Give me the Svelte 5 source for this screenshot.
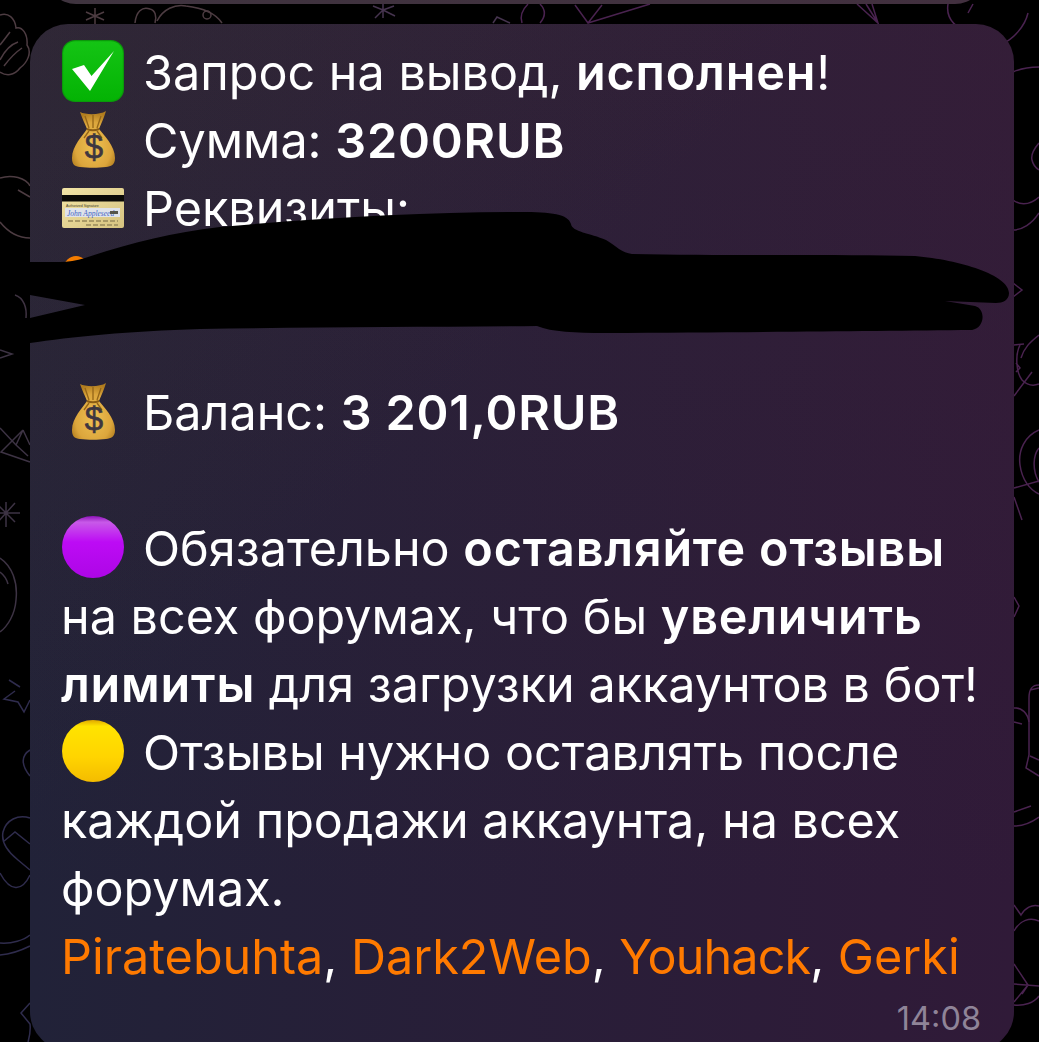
<script>
  const redaction = "M0 262 L60 262 Q72 262 85 258 C130 243 170 233 220 227 C330 217 430 212 520 212 C552 212 568 214 571 224 C572 232 590 233 606 240 C616 246 622 253 632 254 C720 256 840 254 915 256 C960 260 1009 275 1009 293 C1009 300 1003 303 996 303 L945 301 L975 306 C986 309 985 328 972 330 C880 331 760 332 605 333 C575 333 552 332 537 326 C430 327 320 327 200 329 C130 331 70 337 30 343 L0 346 L0 318 L30 318 L85 305 L30 295 L0 292 Z";
</script>

<div class="page">
  <svg class="doodles" viewBox="0 0 1039 1042" width="1039" height="1042" aria-hidden="true">
    <g fill="none" stroke="#4d3c42" stroke-width="1.500">
      <path d="M0 15 C8 12 15 18 16 28 C22 26 28 34 27 45 C32 52 28 62 20 68 C14 76 6 76 0 72" />
      <path d="M0 60 C5 50 12 44 18 42 M4 66 C10 58 16 52 22 48 M0 45 C4 40 7 36 10 32" />
      <path d="M0 178 C12 174 26 178 30 186 M18 190 L30 197 M0 222 C8 232 18 238 30 238" />
      <path d="M15 295 C24 298 27 308 26 318" stroke="#3f3342"/>
      <path d="M95 8 L95 24 M86 12 L104 20 M104 12 L86 20" />
      <path d="M135 23 C136 12 142 6 150 9 C155 10 157 16 155 23 M157 21 C163 9 175 4 186 6 C204 8 216 14 222 23" />
      <circle cx="207" cy="15" r="4" />
    </g>
    <g fill="none" stroke="#46344f" stroke-width="1.500">
      <path d="M383 4 L383 18 M383 10 L373 6 M383 10 L394 6 M383 10 L375 18 M383 10 L395 16" />
      <path d="M493 23 L497 17 L510 23" />
    </g>
    <g fill="none" stroke="#4a2350" stroke-width="1.500">
      <path d="M540 4 C546 10 546 16 540 23 M528 4 C522 10 520 17 522 23" />
      <path d="M575 5 L588 23 L602 5 M588 23 L650 4" />
      <path d="M857 4 L878 23 L872 4 M866 4 L878 23" />
      <path d="M948 4 C946 16 952 27 972 34 C982 38 990 38 1000 37 M973 4 L968 13 M1028 13 C1025 26 1014 39 1000 45 C990 47 975 43 962 36" />
      <path d="M1013 72 C1022 68 1030 67 1039 67" />
      <path d="M1039 143 C1033 150 1031 156 1032 160 C1033 165 1036 168 1039 170" />
      <path d="M1013 200 C1018 204 1028 207 1039 197 M1013 230 C1022 230 1032 224 1039 213" />
      <path d="M1013 283 L1022 290 L1013 297" />
      <path d="M1039 335 C1030 342 1024 348 1021 358 M1014 345 L1024 344 M1020 345 C1015 355 1016 372 1022 380 C1028 386 1034 386 1039 384 M1016 363 L1020 368 L1016 372 M1014 396 L1032 372" />
      <path d="M1039 430 C1025 436 1018 450 1020 465 C1022 480 1030 490 1039 494 M1039 448 C1033 455 1032 470 1039 482 M1014 488 L1039 481 M1014 497 L1022 520" />
      <path d="M1014 597 L1019 606 L1014 617" />
      <path d="M1039 685 C1031 685 1029 690 1029 698 L1029 755 L1026 768 L1039 776 M1030 690 L1039 688 M1030 756 L1039 760" />
      <path d="M1014 708 C1022 707 1028 714 1029 722 M1014 722 L1022 724" />
      <path d="M1014 812 L1031 806 M1014 826 C1024 826 1032 822 1039 817" />
      <path d="M1014 905 L1021 915 C1025 908 1032 904 1039 906 M1014 931 C1020 920 1030 917 1039 921" />
      <path d="M1014 964 L1028 985 L1014 1002 M1014 984 L1039 986 M1014 1005 C1024 1006 1034 1003 1039 996 M1028 985 L1022 994" />
    </g>
    <g fill="none" stroke="#3d3344" stroke-width="1.500">
      <path d="M0 350 L12 354 L0 358" />
      <path d="M0 428 L16 445 L28 456 M23 430 L30 445 M23 430 L1 452 L30 462 M23 430 L16 445" />
      <path d="M-6 513 L20 513 M6 502 L6 527 M-3 504 L15 522 M15 503 L-3 523" />
      <path d="M0 558 C12 566 18 582 16 600 C15 614 8 626 0 632 M0 572 C4 575 7 580 8 584" />
    </g>
    <g fill="none" stroke="#2f2c4d" stroke-width="1.500">
      <path d="M15 691 L4 699 L18 702 L24 712 L30 700 M9 680 L20 687" />
      <path d="M30 750 C22 755 20 764 30 776" />
      <path d="M30 818 C18 814 6 820 3 832 C1 842 8 852 18 860 L30 870 M3 842 L15 832 L30 844 M0 873 C10 892 22 892 30 875" />
      <path d="M0 943 C12 944 24 940 30 935 M0 955 C12 954 22 950 30 946" />
      <path d="M30 1003 L21 1013 L30 1024 C31 1032 29 1038 28 1042" />
    </g>
  </svg>

  <div class="previous"></div>

  <article class="bubble">
    <div class="line">
      <span class="emoji">
        <svg viewBox="0 0 62 62"><defs><linearGradient id="gr" x1="0" y1="0" x2="0" y2="1"><stop offset="0" stop-color="#14c414"/><stop offset="1" stop-color="#04b304"/></linearGradient></defs><rect x="0" y="0" width="62" height="62" rx="13" fill="#0a9a0a"/><rect x="1.200" y="1.200" width="59.600" height="59.600" rx="12" fill="url(#gr)"/><path d="M10 29 L22 25 L29.500 36 L52 11 L28 51 Z" fill="#fff"/></svg>
      </span>
      <span>Запрос на вывод, <b>исполнен</b>!</span>
    </div>
    <div class="line">
      <span class="emoji">
        <svg viewBox="0 0 62 62"><use href="#bag"/></svg>
      </span>
      <span>Сумма: <b>3200RUB</b></span>
    </div>
    <div class="line">
      <span class="emoji">
        <svg viewBox="0 0 62 62"><defs><linearGradient id="cd" x1="0" y1="0" x2="1" y2="1"><stop offset="0" stop-color="#f2e4a6"/><stop offset="1" stop-color="#d6c380"/></linearGradient></defs><rect x="0" y="12" width="62" height="40" rx="2" fill="url(#cd)"/><rect x="0" y="19" width="62" height="6.500" fill="#0b0a06"/><text x="4" y="31" font-family="Liberation Sans, sans-serif" font-size="3.500" fill="#3c3a2a">Authorized Signature</text><rect x="3" y="32" width="55" height="9" fill="#dfe3ea"/><text x="5" y="40" font-family="Liberation Serif, serif" font-style="italic" font-size="7.500" fill="#3f66c4">John Appleseed</text><rect x="48" y="35" width="8" height="3" fill="#55554c"/><path d="M6 45 H56 M24 49 H56" stroke="#a99a66" stroke-width="1.800" stroke-dasharray="5 2"/></svg>
      </span>
      <span>Реквизиты:</span>
    </div>
    <div class="line">
      <span class="emoji"><svg viewBox="0 0 62 62"><circle cx="14" cy="24" r="12" fill="#f47c00"/></svg></span>
    </div>
    <div class="line"></div>
    <div class="line">
      <span class="emoji">
        <svg viewBox="0 0 62 62"><use href="#bag"/></svg>
      </span>
      <span>Баланс: <b>3 201,0RUB</b></span>
    </div>
    <div class="line"></div>
    <div class="line">
      <span class="emoji">
        <svg viewBox="0 0 62 62"><defs><linearGradient id="pu" x1="0" y1="0" x2="0" y2="1"><stop offset="0" stop-color="#8d12b8"/><stop offset=".1" stop-color="#c85ae8"/><stop offset=".42" stop-color="#bd0bf5"/><stop offset="1" stop-color="#ad06e6"/></linearGradient></defs><circle cx="31" cy="31" r="31" fill="url(#pu)"/></svg>
      </span>
      <span>Обязательно <b>оставляйте отзывы</b></span>
    </div>
    <div class="line"><span>на всех форумах, что бы <b>увеличить</b></span></div>
    <div class="line"><span><b>лимиты</b> для загрузки аккаунтов в бот!</span></div>
    <div class="line">
      <span class="emoji">
        <svg viewBox="0 0 62 62"><defs><linearGradient id="ye" x1="0" y1="0" x2="0" y2="1"><stop offset="0" stop-color="#e0a800"/><stop offset=".1" stop-color="#ffe400"/><stop offset=".6" stop-color="#ffd400"/><stop offset="1" stop-color="#f4bc00"/></linearGradient></defs><circle cx="31" cy="31" r="31" fill="url(#ye)"/></svg>
      </span>
      <span>Отзывы нужно оставлять после</span>
    </div>
    <div class="line"><span>каждой продажи аккаунта, на всех</span></div>
    <div class="line"><span>форумах.</span></div>
    <div class="line"><span><a href="#p">Piratebuhta</a>, <a href="#d">Dark2Web</a>, <a class="tight" href="#y">Youhack</a>, <a href="#g">Gerki</a></span></div>
    <time class="time">14:08</time>
  </article>

  <svg class="defs" width="0" height="0" aria-hidden="true">
    <defs>
      <radialGradient id="bagfill" cx=".5" cy=".62" r=".6"><stop offset="0" stop-color="#eec052"/><stop offset=".7" stop-color="#dca63c"/><stop offset="1" stop-color="#b07c1e"/></radialGradient>
      <g id="bag">
        <path d="M18 4 C24 7 38 7 44 3 C42 10 39 16 37 21 C42 27 53 38 53 50 C53 57 49 58.500 44 59 C36 60 26 60 18 59 C13 58.500 10 57 10 50 C10 38 21 27 25 21 C23 16 20 10 18 4 Z" fill="url(#bagfill)"/>
        <path d="M23 8 L27 20 M31 7 V20 M39 8 L35 20 M27 23 L22 30 M35 23 L40 30" stroke="#946518" stroke-width="1.300" fill="none"/>
        <path d="M25 21 Q31 23.500 37 21" stroke="#8a5c14" stroke-width="2" fill="none"/>
        <text x="32" y="50" text-anchor="middle" font-family="Liberation Sans, sans-serif" font-size="33" fill="#3d3640" stroke="#3d3640" stroke-width=".6">$</text>
      </g>
    </defs>
  </svg>

  <svg class="redaction" viewBox="0 0 1039 1042" width="1039" height="1042" aria-hidden="true">
    <path d={redaction} fill="#000"/>
  </svg>
</div>

<style>
  :global(body) {
    margin: 0;
    background: #000;
  }
  .page {
    position: relative;
    width: 1039px;
    height: 1042px;
    overflow: hidden;
    background: #000;
    box-sizing: border-box;
    padding: 24px 25px 0 30px;
    font-family: Inter, "Noto Sans", sans-serif;
  }
  .doodles, .redaction {
    position: absolute;
    inset: 0;
  }
  .defs { position: absolute; }
  .previous {
    position: absolute;
    top: -30px;
    left: 46px;
    right: 54px;
    height: 34px;
    border-radius: 0 0 30px 30px;
    background: linear-gradient(to right, #3f343f, #42303f);
  }
  .bubble {
    position: relative;
    box-sizing: border-box;
    height: 1026px;
    padding: 15px 20px 0 31px;
    border-radius: 38px;
    color: #fff;
    font-size: 48.500px;
    background:
      linear-gradient(135deg, rgba(90, 60, 40, 0.14), rgba(90, 60, 40, 0) 40%),
      linear-gradient(to bottom, rgba(70, 45, 55, 0.18), rgba(70, 45, 55, 0) 85%),
      linear-gradient(to right, #212238, #301a38);
  }
  .line {
    display: flex;
    align-items: center;
    gap: 19px;
    height: 68px;
    white-space: pre;
    line-height: 68px;
  }
  .emoji {
    flex: none;
    width: 62px;
    height: 62px;
    display: block;
    margin-left: 1px;
    transform: translateY(-2px);
  }
  .emoji svg { display: block; width: 62px; height: 62px; }
  b { font-weight: 600; letter-spacing: 0.800px; }
  a { color: #ff7a00; text-decoration: none; }
  .tight { letter-spacing: -0.900px; }
  .time {
    position: absolute;
    right: 33px;
    bottom: 12px;
    font-size: 32.500px;
    color: #8f8498;
  }
</style>
